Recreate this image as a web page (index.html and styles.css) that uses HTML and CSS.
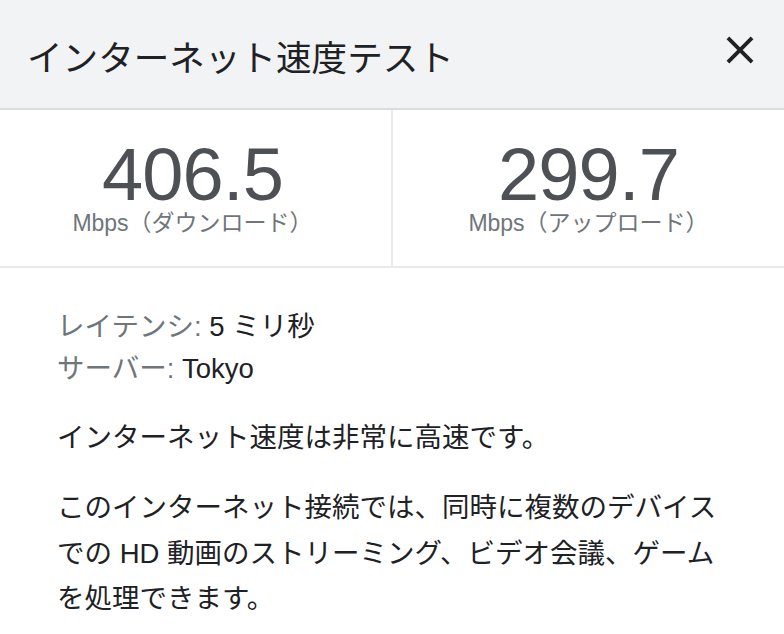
FILE: index.html
```html
<!DOCTYPE html>
<html lang="ja">
<head>
<meta charset="utf-8">
<title>インターネット速度テスト</title>
<link rel="stylesheet" href="styles.css">
</head>
<body>
<div class="panel">
  <header class="header">
    <h1 class="title">インターネット速度テスト</h1>
    <svg class="close" viewBox="0 0 24 24" aria-label="閉じる"><path d="M19 6.41L17.59 5 12 10.59 6.41 5 5 6.41 10.59 12 5 17.59 6.41 19 12 13.41 17.59 19 19 17.59 13.41 12z"/></svg>
  </header>
  <section class="stats">
    <div class="stat stat-down">
      <div class="value">406.5</div>
      <div class="unit">Mbps（ダウンロード）</div>
    </div>
    <div class="stat">
      <div class="value">299.7</div>
      <div class="unit">Mbps（アップロード）</div>
    </div>
  </section>
  <section class="details">
    <div class="meta">
      <div class="meta-row"><span class="label">レイテンシ: </span><span class="val">5 ミリ秒</span></div>
      <div class="meta-row"><span class="label">サーバー: </span><span class="val">Tokyo</span></div>
    </div>
    <p class="summary">インターネット速度は非常に高速です。</p>
    <p class="desc">このインターネット接続では、同時に複数のデバイスでの HD 動画のストリーミング、ビデオ会議、ゲームを処理できます。</p>
  </section>
</div>
</body>
</html>
```

FILE: styles.css
```css
html, body {
  margin: 0;
  padding: 0;
  background: #ffffff;
}
body {
  font-family: "Liberation Sans", "Noto Sans CJK JP", sans-serif;
  color: #202124;
}
.panel {
  width: 784px;
}
.header {
  box-sizing: border-box;
  height: 110px;
  background: #f1f3f4;
  border-bottom: 2px solid #dadce0;
  display: flex;
  justify-content: space-between;
  align-items: flex-start;
  padding: 37px 21px 0 27px;
}
.title {
  margin: 0;
  font-size: 35.6px;
  line-height: 44px;
  font-weight: 400;
  color: #202124;
}
.close {
  width: 46px;
  height: 46px;
  margin-top: -10px;
  fill: #202124;
}
.stats {
  display: grid;
  grid-template-columns: 393px 1fr;
  border-bottom: 2px solid #e8eaed;
}
.stat {
  padding: 33px 0 29px;
  text-align: center;
}
.stat-down {
  border-right: 2px solid #e8eaed;
  padding-right: 6px;
}
.value {
  font-size: 74px;
  line-height: 64px;
  letter-spacing: -0.8px;
  color: #4d5156;
}
.unit {
  margin-top: 2px;
  font-size: 23px;
  line-height: 28px;
  color: #70757a;
}
.details {
  padding: 38px 57px 0;
  font-size: 27.5px;
}
.meta-row {
  line-height: 42px;
}
.label {
  color: #70757a;
}
.val {
  color: #202124;
}
.summary {
  margin: 25px 0 0;
  line-height: 45.5px;
}
.desc {
  margin: 24.5px 0 0;
  line-height: 45.5px;
}
```
